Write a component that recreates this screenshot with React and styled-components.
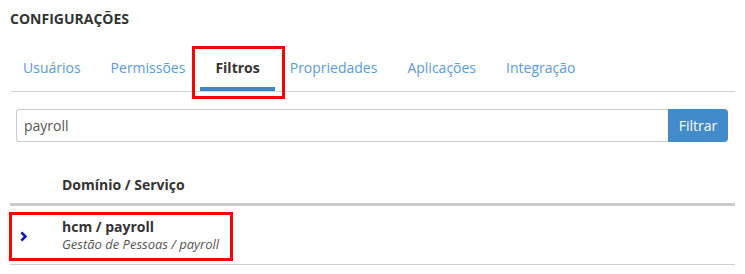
import React from "react"
import styled, { createGlobalStyle } from "styled-components"

const GlobalStyle = createGlobalStyle`
  body {
    margin: 0;
    background: #fff;
    font-family: "Open Sans", "Liberation Sans", sans-serif;
    color: #333;
  }
`;

const Page = styled.div`
    width: 745px;
    padding: 9px 10px 0 10px;
    box-sizing: border-box;
`;

const Title = styled.h1`
    margin: 0;
    font-size: 14px;
    line-height: 20px;
    font-weight: 700;
    text-transform: uppercase;
    color: #333;
`;

const TabBar = styled.ul`
    list-style: none;
    display: flex;
    margin: 19px 0 0 0;
    padding: 0;
    border-bottom: 1px solid #d4d4d4;
`;

const Tab = styled.li`
    position: relative;
    margin-left: ${p => (p.$first ? "-2px" : "0")};
    padding: 10px 15px 9px 15px;
    font-size: 14px;
    line-height: 20px;
    font-weight: ${p => (p.$active ? 700 : 400)};
    color: ${p => (p.$active ? "#333" : "#5b9bd8")};
    border-bottom: 4px solid ${p => (p.$active ? "#3f87c6" : "transparent")};
    cursor: pointer;
`;

const Highlight = styled.span`
    position: absolute;
    left: ${p => p.$left}px;
    right: ${p => p.$right}px;
    top: ${p => p.$top}px;
    bottom: ${p => p.$bottom}px;
    border: 3px solid #f00;
    pointer-events: none;
`;

const SearchRow = styled.div`
    display: flex;
    margin: 17px 7px 0 6px;
    height: 33px;
`;

const SearchInput = styled.input`
    flex: 1;
    height: 33px;
    box-sizing: border-box;
    border: 1px solid #ccc;
    border-right: none;
    border-radius: 3px 0 0 3px;
    padding: 0 7px;
    font-family: "Open Sans", "Liberation Sans", sans-serif;
    font-size: 14px;
    color: #555;
    outline: none;
`;

const FilterButton = styled.button`
    width: 60px;
    height: 33px;
    border: none;
    border-radius: 0 4px 4px 0;
    background: #428bca;
    color: #fff;
    font-family: "Open Sans", "Liberation Sans", sans-serif;
    font-size: 14px;
    padding: 0;
`;

const Table = styled.div`
    margin-top: 33px;
`;

const HeadRow = styled.div`
    display: grid;
    grid-template-columns: 52px 1fr;
    padding-bottom: 8px;
    border-bottom: 3px solid #cbcbcb;
    font-size: 14px;
    line-height: 20px;
    font-weight: 700;
    color: #333;
`;

const Row = styled.div`
    position: relative;
    display: grid;
    grid-template-columns: 52px 1fr;
    align-items: center;
    padding: 12px 0 12px 0;
    border-bottom: 1px solid #d0d0d0;
`;

const Toggle = styled.div`
    display: flex;
    padding-left: 10px;
    padding-top: 3px;
`;

const Name = styled.div`
    font-size: 14px;
    line-height: 18px;
    font-weight: 700;
    color: #333;
`;

const Sub = styled.div`
    font-size: 13px;
    line-height: 16px;
    font-style: italic;
    color: #555;
`;

const Chevron = () => (
    <svg width="7" height="11" viewBox="0 0 7 11">
        <polyline points="1.4,1.3 5.4,5.5 1.4,9.7" fill="none" stroke="#1212d8" strokeWidth="2.6" />
    </svg>
)

const tabs = ["Usuários", "Permissões", "Filtros", "Propriedades", "Aplicações", "Integração"]

export default function App() {
    return (
        <Page>
            <GlobalStyle />
            <Title>Configurações</Title>
            <TabBar>
                {tabs.map((t, i) => (
                    <Tab key={t} $first={i === 0} $active={t === "Filtros"}>
                        {t}
                        {t === "Filtros" && <Highlight $left={-8} $right={-10} $top={-2} $bottom={-12} />}
                    </Tab>
                ))}
            </TabBar>
            <SearchRow>
                <SearchInput defaultValue="payroll" />
                <FilterButton>Filtrar</FilterButton>
            </SearchRow>
            <Table>
                <HeadRow>
                    <span />
                    <span>Domínio / Serviço</span>
                </HeadRow>
                <Row>
                    <Toggle><Chevron /></Toggle>
                    <div>
                        <Name>hcm / payroll</Name>
                        <Sub>Gestão de Pessoas / payroll</Sub>
                    </div>
                    <Highlight $left={-1} $right={502} $top={6} $bottom={3} />
                </Row>
            </Table>
        </Page>
    )
}
